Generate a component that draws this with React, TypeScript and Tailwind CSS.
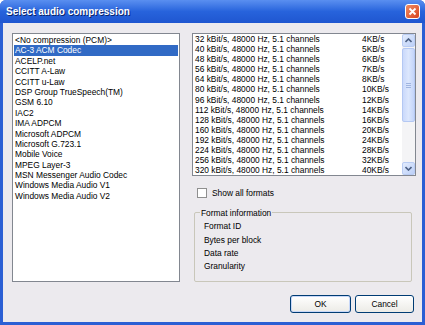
import React from 'react';

const codecs = [
  '<No compression (PCM)>',
  'AC-3 ACM Codec',
  'ACELP.net',
  'CCITT A-Law',
  'CCITT u-Law',
  'DSP Group TrueSpeech(TM)',
  'GSM 6.10',
  'IAC2',
  'IMA ADPCM',
  'Microsoft ADPCM',
  'Microsoft G.723.1',
  'Mobile Voice',
  'MPEG Layer-3',
  'MSN Messenger Audio Codec',
  'Windows Media Audio V1',
  'Windows Media Audio V2',
];

const rates = [32, 40, 48, 56, 64, 80, 96, 112, 128, 160, 192, 224, 256, 320];

const font = { fontFamily: '"Liberation Sans", Arial, sans-serif' };

function Chevron({ up }: { up?: boolean }) {
  return (
    <svg width="7" height="5" viewBox="0 0 7 5">
      <path
        d={up ? 'M0.5 4 L3.5 1 L6.5 4' : 'M0.5 1 L3.5 4 L6.5 1'}
        fill="none"
        stroke="#4d6185"
        strokeWidth="1.6"
      />
    </svg>
  );
}

function ScrollBar() {
  return (
    <div className="w-[13px] h-full flex flex-col bg-[#f4f4f6]">
      <div className="h-[13px] rounded-[2px] border border-[#b9ccf3] bg-gradient-to-br from-[#e3ecfd] to-[#bcd0f8] flex items-center justify-center">
        <Chevron up />
      </div>
      <div className="flex-1 pt-[1px]">
        <div className="h-[74px] rounded-[2px] border border-[#b4c8f3] bg-gradient-to-r from-[#cad9fb] via-[#dce7fd] to-[#c4d5fa] flex items-center justify-center">
          <div className="flex flex-col gap-[1px]">
            <div className="w-[5px] h-[1px] bg-[#9fb4e0]" />
            <div className="w-[5px] h-[1px] bg-[#9fb4e0]" />
            <div className="w-[5px] h-[1px] bg-[#9fb4e0]" />
          </div>
        </div>
      </div>
      <div className="h-[13px] rounded-[2px] border border-[#b9ccf3] bg-gradient-to-br from-[#e3ecfd] to-[#bcd0f8] flex items-center justify-center">
        <Chevron />
      </div>
    </div>
  );
}

export default function App() {
  return (
    <div
      className="w-[425px] h-[325px] flex flex-col bg-[#2b5fd4] rounded-t-[6px] overflow-hidden text-[8.4px] text-black"
      style={font}
    >
      <div className="h-[23px] flex items-center justify-between pl-[6px] pr-[5px] bg-gradient-to-b from-[#5a8ff0] via-[#2763dc] to-[#1f56d0]">
        <span className="text-white font-bold text-[10px] [text-shadow:1px_1px_0_#0a246a]">
          Select audio compression
        </span>
        <div className="w-[15px] h-[15px] rounded-[3px] border border-white bg-gradient-to-br from-[#ef8a62] to-[#d7421a] flex items-center justify-center">
          <svg width="9" height="9" viewBox="0 0 9 9">
            <path d="M1.5 1.5 L7.5 7.5 M7.5 1.5 L1.5 7.5" stroke="white" strokeWidth="1.8" />
          </svg>
        </div>
      </div>

      <div className="flex-1 mx-[3px] mb-[3px] bg-[#eceaee] flex flex-col pt-[10px] pl-[9px] pr-[6px]">
        <div className="flex gap-[12px] h-[249px]">
          <div className="w-[168px] h-full border border-[#828790] bg-white py-[1px] px-[1px]">
            {codecs.map((c, i) => (
              <div
                key={c}
                className={`h-[10.4px] leading-[10.4px] pl-[1px] whitespace-nowrap ${
                  i === 1 ? 'bg-[#316ac5] text-white' : ''
                }`}
              >
                {c}
              </div>
            ))}
          </div>

          <div className="w-[224px] flex flex-col">
            <div className="h-[144px] border border-[#828790] bg-white flex">
              <div className="flex-1 overflow-hidden pl-[2px]">
                {rates.map((r) => (
                  <div key={r} className="flex h-[10.1px] leading-[10.1px] whitespace-nowrap">
                    <span className="w-[167px]">{`${r} kBit/s, 48000 Hz, 5.1 channels`}</span>
                    <span>{`${r / 8}KB/s`}</span>
                  </div>
                ))}
              </div>
              <ScrollBar />
            </div>

            <div className="flex items-center mt-[12px] pl-[5px] h-[10px]">
              <div className="w-[10px] h-[10px] border border-[#8f8f8f] bg-white" />
              <span className="ml-[5px]">Show all formats</span>
            </div>

            <div className="relative mt-[14px] ml-[2px] mr-[4px] h-[70px] border border-[#c9c7ba] rounded-[2px] pt-[7px] pl-[9px]">
              <span className="absolute -top-[6px] left-[5px] px-[1px] bg-[#eceaee]">
                Format information
              </span>
              <div className="leading-[13.2px]">Format ID</div>
              <div className="leading-[13.2px]">Bytes per block</div>
              <div className="leading-[13.2px]">Data rate</div>
              <div className="leading-[13.2px]">Granularity</div>
            </div>
          </div>
        </div>

        <div className="flex justify-end gap-[4px] mt-[13px] pr-[2px]">
          <div className="w-[61px] h-[18px] border border-[#003c74] rounded-[3px] bg-gradient-to-b from-white to-[#ecebe6] shadow-[inset_0_0_0_1px_#c8d8f8] flex items-center justify-center">
            OK
          </div>
          <div className="w-[59px] h-[18px] border border-[#003c74] rounded-[3px] bg-gradient-to-b from-white to-[#ecebe6] flex items-center justify-center">
            Cancel
          </div>
        </div>
      </div>
    </div>
  );
}
